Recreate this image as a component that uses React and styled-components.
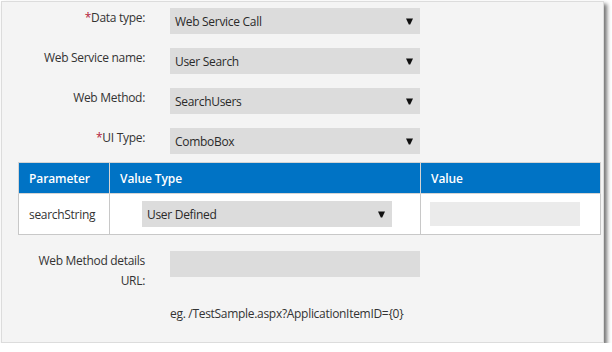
import React from "react";
import styled, { createGlobalStyle } from "styled-components";

const FONT = `"Open Sans", "Noto Sans", sans-serif`;

const Global = createGlobalStyle`
  html, body { margin: 0; padding: 0; background: #ffffff; }
  body { font-family: ${FONT}; font-size: 12px; letter-spacing: -0.3px; color: #333333; }
`;

const Panel = styled.div`
  box-sizing: border-box;
  width: 603px;
  height: 342px;
  margin: 1px 0 0 1px;
  background: #f4f4f4;
  border: 1px solid #dcdcdc;
  box-shadow: 3px 3px 4px rgba(0, 0, 0, 0.55);
  padding-top: 6px;
  display: flex;
  flex-direction: column;
`;

const Fields = styled.div`
  display: flex;
  flex-direction: column;
  gap: 14px;
`;

const FieldRow = styled.div`
  display: grid;
  grid-template-columns: 143px 250px;
  column-gap: 25px;
  align-items: start;
`;

const Label = styled.div`
  justify-self: end;
  max-width: ${(p) => p.$max || 143}px;
  text-align: right;
  line-height: 20px;
  color: #333;
`;

const Req = styled.span`
  color: #b3203a;
`;

const SelectBox = styled.div`
  box-sizing: border-box;
  width: ${(p) => p.$w || 250}px;
  height: 26px;
  background: #dcdcdc;
  display: flex;
  align-items: center;
  justify-content: space-between;
  padding: 0 7px 0 5px;
  font-size: 12px;
  color: #2a2a2a;
`;

const Arrow = () => (
  <svg width="7" height="7" viewBox="0 0 7 7">
    <path d="M0 0.5H7L4.2 6.5H2.8Z" fill="#111" />
  </svg>
);

const Select = ({ value, w }) => (
  <SelectBox $w={w}>
    <span>{value}</span>
    <Arrow />
  </SelectBox>
);

const Table = styled.table`
  margin: 8px 0 0 16px;
  width: 582px;
  border-collapse: collapse;
  table-layout: fixed;
  background: #ffffff;
`;

const Th = styled.th`
  background: #0073c5;
  color: #ffffff;
  font-weight: 600;
  letter-spacing: -0.1px;
  text-align: left;
  height: 30px;
  padding: 0 0 0 10px;
  border: 1px solid #d4d4d4;
  font-size: 12px;
`;

const Td = styled.td`
  height: 40px;
  padding: 0 0 0 ${(p) => p.$pl || 10}px;
  border: 1px solid #c8c8c8;
  vertical-align: middle;
`;

const ValueInput = styled.div`
  width: 150px;
  height: 24px;
  background: #ebebeb;
`;

const UrlRow = styled(FieldRow)`
  margin-top: 16px;
`;

const UrlInput = styled.div`
  width: 250px;
  height: 26px;
  background: #dcdcdc;
`;

const Hint = styled.div`
  margin: 13px 0 0 168px;
  line-height: 20px;
`;

export default function App() {
  return (
    <>
      <Global />
      <Panel>
        <Fields>
          <FieldRow>
            <Label>
              <Req>*</Req>Data type:
            </Label>
            <Select value="Web Service Call" />
          </FieldRow>
          <FieldRow>
            <Label>Web Service name:</Label>
            <Select value="User Search" />
          </FieldRow>
          <FieldRow>
            <Label>Web Method:</Label>
            <Select value="SearchUsers" />
          </FieldRow>
          <FieldRow>
            <Label>
              <Req>*</Req>UI Type:
            </Label>
            <Select value="ComboBox" />
          </FieldRow>
        </Fields>
        <Table>
          <colgroup>
            <col style={{ width: 91 }} />
            <col style={{ width: 311 }} />
            <col style={{ width: 180 }} />
          </colgroup>
          <thead>
            <tr>
              <Th>Parameter</Th>
              <Th>Value Type</Th>
              <Th>Value</Th>
            </tr>
          </thead>
          <tbody>
            <tr>
              <Td>searchString</Td>
              <Td $pl={32}>
                <Select value="User Defined" />
              </Td>
              <Td $pl={9}>
                <ValueInput />
              </Td>
            </tr>
          </tbody>
        </Table>
        <UrlRow>
          <Label $max={112}>Web Method details URL:</Label>
          <UrlInput />
        </UrlRow>
        <Hint>eg. /TestSample.aspx?ApplicationItemID={"{0}"}</Hint>
      </Panel>
    </>
  );
}
